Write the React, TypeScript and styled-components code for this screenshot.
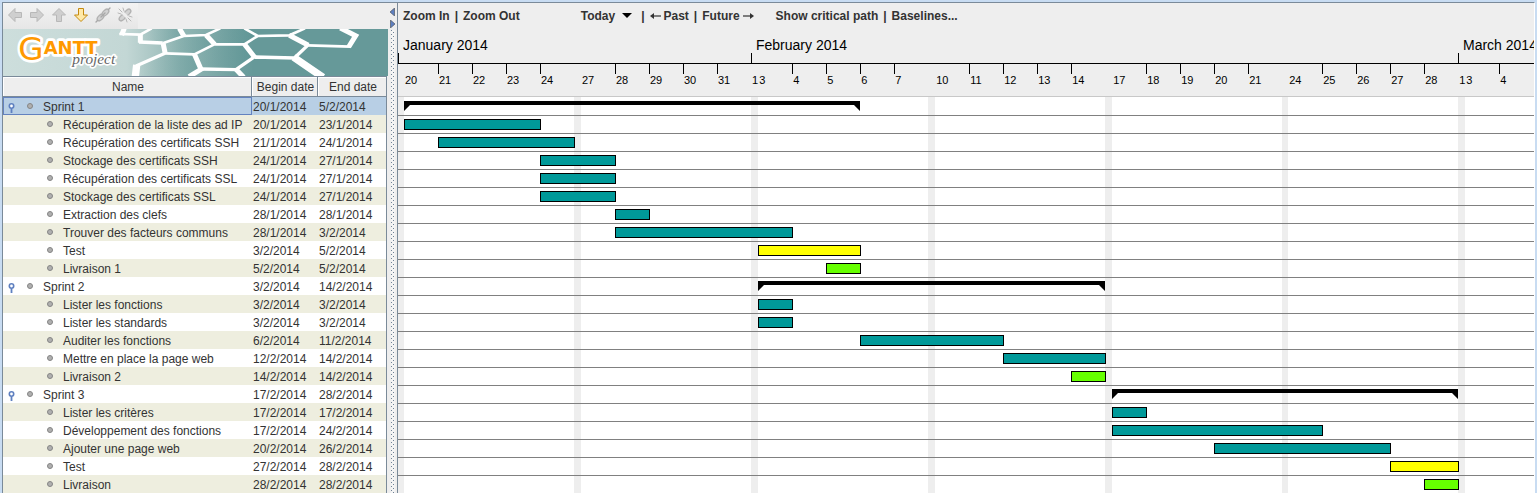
import React from "react";
import styled, { createGlobalStyle } from "styled-components";

const GlobalStyle = createGlobalStyle`
  * { box-sizing: border-box; }
  body {
    margin: 0;
    background: #eeeeee;
    color: #333333;
    font: 12px/18px "Liberation Sans", Arial, sans-serif;
  }
`;

/* ---------- Data ---------- */

const DAY = 34;
const LEAD = 6;

type Week = { days: number[]; gap: number; monthStart?: boolean };

const weeks: Week[] = [
  { days: [20, 21, 22, 23, 24], gap: 7 },
  { days: [27, 28, 29, 30, 31], gap: 7, monthStart: true },
  { days: [3, 4, 5, 6, 7], gap: 7 },
  { days: [10, 11, 12, 13, 14], gap: 7 },
  { days: [17, 18, 19, 20, 21], gap: 6 },
  { days: [24, 25, 26, 27, 28], gap: 7, monthStart: true },
  { days: [3, 4], gap: 7 },
];

const weekStart = (index: number) =>
  weeks.slice(0, index).reduce((x, week) => x + DAY * 5 + week.gap, LEAD);

const months = [
  { name: "January 2014", width: weekStart(2) - 7 },
  { name: "February 2014", width: weekStart(6) - weekStart(2) },
  { name: "March 2014", width: 200 },
];

type Kind = "summary" | "task" | "test" | "delivery";
type Task = {
  name: string;
  begin: string;
  end: string;
  kind: Kind;
  /* [week, working day] of the first day and of the last day */
  from: [number, number];
  to: [number, number];
};

const t = (
  name: string,
  begin: string,
  end: string,
  kind: Kind,
  from: [number, number],
  to: [number, number]
): Task => ({ name, begin, end, kind, from, to });

const tasks: Task[] = [
  t("Sprint 1", "20/1/2014", "5/2/2014", "summary", [0, 0], [2, 2]),
  t("Récupération de la liste des ad IP", "20/1/2014", "23/1/2014", "task", [0, 0], [0, 3]),
  t("Récupération des certificats SSH", "21/1/2014", "24/1/2014", "task", [0, 1], [0, 4]),
  t("Stockage des certificats SSH", "24/1/2014", "27/1/2014", "task", [0, 4], [1, 0]),
  t("Récupération des certificats SSL", "24/1/2014", "27/1/2014", "task", [0, 4], [1, 0]),
  t("Stockage des certificats SSL", "24/1/2014", "27/1/2014", "task", [0, 4], [1, 0]),
  t("Extraction des clefs", "28/1/2014", "28/1/2014", "task", [1, 1], [1, 1]),
  t("Trouver des facteurs communs", "28/1/2014", "3/2/2014", "task", [1, 1], [2, 0]),
  t("Test", "3/2/2014", "5/2/2014", "test", [2, 0], [2, 2]),
  t("Livraison 1", "5/2/2014", "5/2/2014", "delivery", [2, 2], [2, 2]),
  t("Sprint 2", "3/2/2014", "14/2/2014", "summary", [2, 0], [3, 4]),
  t("Lister les fonctions", "3/2/2014", "3/2/2014", "task", [2, 0], [2, 0]),
  t("Lister les standards", "3/2/2014", "3/2/2014", "task", [2, 0], [2, 0]),
  t("Auditer les fonctions", "6/2/2014", "11/2/2014", "task", [2, 3], [3, 1]),
  t("Mettre en place la page web", "12/2/2014", "14/2/2014", "task", [3, 2], [3, 4]),
  t("Livraison 2", "14/2/2014", "14/2/2014", "delivery", [3, 4], [3, 4]),
  t("Sprint 3", "17/2/2014", "28/2/2014", "summary", [4, 0], [5, 4]),
  t("Lister les critères", "17/2/2014", "17/2/2014", "task", [4, 0], [4, 0]),
  t("Développement des fonctions", "17/2/2014", "24/2/2014", "task", [4, 0], [5, 0]),
  t("Ajouter une page web", "20/2/2014", "26/2/2014", "task", [4, 3], [5, 2]),
  t("Test", "27/2/2014", "28/2/2014", "test", [5, 3], [5, 4]),
  t("Livraison", "28/2/2014", "28/2/2014", "delivery", [5, 4], [5, 4]),
];

const dayX = ([week, day]: [number, number]) => weekStart(week) + day * DAY;

/* ---------- Window ---------- */

const Window = styled.main`
  display: flex;
  height: 100vh;
  overflow: hidden;
  border: solid #c8dcf2;
  border-width: 2px 2px 0;
`;

const TaskPanel = styled.section`
  flex: 0 0 386px;
  border: solid #7a8a99;
  border-width: 1px 0 0 1px;
`;

const Splitter = styled.div`
  flex: 0 0 9px;
  display: flex;
  flex-direction: column;
  border-top: 1px solid #7a8a99;
  padding: 3px 1px 0 2px;
`;

const SplitterButton = styled.button`
  display: block;
  height: 12px;
  padding: 0;
  border: 0;
  background: none;
  svg { display: block; }
`;

const SplitterGrip = styled.div`
  flex: 1;
  width: 4px;
  margin-left: 1px;
  background-color: #f4f4f4;
  background-image:
    conic-gradient(at 1px 1px, transparent 75%, #6f8296 0),
    conic-gradient(at 1px 1px, transparent 75%, #6f8296 0);
  background-size: 4px 4px;
  background-position: 0 0, 2px 2px;
`;

const ChartPanel = styled.section`
  flex: 1;
  min-width: 0;
  display: flex;
  flex-direction: column;
  border: solid #7a8a99;
  border-width: 1px 0 0 1px;
  border-right: 1px solid #ffffff;
  overflow: hidden;
`;

/* ---------- Task panel ---------- */

const IconBar = styled.div`
  display: flex;
  width: 135px;
  height: 26px;
  padding: 1px 0 0 1px;
  background: linear-gradient(#f3f3f3, #e6e6e6);
`;

const IconButton = styled.button`
  width: 22px;
  height: 22px;
  padding: 3px;
  border: 0;
  background: none;
  svg { display: block; }
`;

const Banner = styled.svg`
  display: block;
  width: 385px;
  height: 47px;
`;

const Table = styled.table`
  width: 384px;
  table-layout: fixed;
  border-collapse: separate;
  border-spacing: 0;
  border-right: 1px solid #7a8a99;
`;

const HeadCell = styled.th<{ $width?: number }>`
  width: ${(p) => (p.$width ? p.$width + "px" : "auto")};
  height: 21px;
  padding: 2px 0 0 2px;
  border: 1px solid #7a8a99;
  border-left: 0;
  box-shadow: inset 1px 1px #ffffff;
  background: #eeeeee;
  font-weight: normal;
  line-height: 17px;
  white-space: nowrap;
  &:last-child { border-right: 0; }
`;

const Row = styled.tr<{ $selected: boolean }>`
  background: #ffffff;
  &:nth-child(even) { background: #eeeedf; }
  ${(p) => p.$selected && "background: #b8cfe5;"}
`;

const Cell = styled.td`
  height: 18px;
  padding: 2px 0 0 1px;
  line-height: 16px;
  white-space: nowrap;
`;

const NameCell = styled(Cell)<{ $selected: boolean }>`
  padding: 2px 0 0;
  ${(p) => p.$selected && "box-shadow: inset 0 0 0 1px #6382bf;"}
`;

const NameContent = styled.div<{ $child: boolean }>`
  display: flex;
  align-items: center;
  height: 16px;
  padding-left: ${(p) => (p.$child ? 44 : 4)}px;
`;

const Toggle = styled.button`
  width: 20px;
  height: 14px;
  padding: 0;
  border: 0;
  background: none;
  svg { display: block; }
`;

const Bullet = styled.span`
  width: 6px;
  height: 6px;
  margin: 0 10px 2px 0;
  border: 1px solid #858585;
  border-radius: 50%;
  background: #b0b0b0;
`;

/* ---------- Chart panel ---------- */

const ChartBar = styled.nav`
  display: flex;
  height: 26px;
  padding: 4px 0 0 5px;
  font-weight: bold;
`;

const Group = styled.div<{ $after: number }>`
  display: flex;
  gap: 5px;
  margin-right: ${(p) => p.$after}px;
`;

const TextButton = styled.button`
  display: flex;
  align-items: center;
  gap: 3px;
  height: 18px;
  padding: 0;
  border: 0;
  background: none;
  color: inherit;
  font: inherit;
  white-space: nowrap;
`;

const Months = styled.div`
  display: flex;
  align-items: flex-end;
  height: 35px;
  border-bottom: 1px solid #000000;
  color: #000000;
`;

const Month = styled.div<{ $width: number }>`
  flex: 0 0 ${(p) => p.$width}px;
  padding: 0 0 9px 5px;
  background: linear-gradient(#000, #000) 0 100% / 1px 10px no-repeat;
  font-size: 14px;
  line-height: 18px;
  white-space: nowrap;
`;

const Days = styled.div`
  display: flex;
  height: 33px;
  border-bottom: 1px solid #c8c8c8;
  color: #000000;
  font-size: 11px;
`;

const DayLabel = styled.div<{ $width: number; $tick?: boolean }>`
  flex: 0 0 ${(p) => p.$width}px;
  padding: 7px 0 0 1px;
  background: ${(p) =>
    p.$tick ? "linear-gradient(#000, #000) 0 0 / 1px 10px no-repeat" : "none"};
`;

const Plot = styled.div`
  display: grid;
  flex: 1;
  min-height: 0;
  background: #ffffff;
  padding-top: 1px;
`;

const Weekends = styled.div`
  grid-area: 1 / 1;
  display: flex;
  margin-top: -1px;
  min-width: 0;
  overflow: hidden;
`;

const Weekend = styled.div<{ $width: number }>`
  flex: 0 0 ${(p) => p.$width}px;
  margin-right: ${DAY * 5}px;
  background: #eeeeee;
`;

const Bars = styled.div`
  grid-area: 1 / 1;
  min-width: 0;
`;

const Lane = styled.div`
  height: 18px;
  padding-top: 3px;
  border-bottom: 1px solid #808080;
`;

const colours = { summary: "#000000", task: "#009999", test: "#ffff00", delivery: "#66ff00" };

const Bar = styled.div<{ $kind: Kind }>`
  background: ${(p) => colours[p.$kind]};
  ${(p) =>
    p.$kind === "summary"
      ? `height: 10px;
         clip-path: polygon(0 0, 100% 0, 100% 100%, calc(100% - 6px) 4px, 6px 4px, 0 100%);`
      : `height: 11px;
         border: 1px solid #000000;`}
`;

/* ---------- Icons ---------- */

const BlockArrow = ({ angle, active }: { angle: number; active?: boolean }) => (
  <svg width="16" height="16" viewBox="0 0 16 16">
    <path
      d="M1.5 8 8 1.5V5.5H14.5V10.5H8V14.5Z"
      transform={`rotate(${angle} 8 8)`}
      fill={active ? "#ffe9a8" : "#cfcfcf"}
      stroke={active ? "#c48a10" : "#b8b8b8"}
      strokeLinejoin="round"
    />
  </svg>
);

const Chain = ({ broken }: { broken?: boolean }) => (
  <svg width="16" height="16" viewBox="0 0 16 16" fill="none" strokeLinecap="round">
    <g stroke="#b2b2b2" strokeWidth="1.4">
      <ellipse cx="5.5" cy="10.5" rx="4" ry="2.3" transform="rotate(-45 5.5 10.5)" fill="#d2d2d2" />
      <ellipse cx="10.5" cy="5.5" rx="4" ry="2.3" transform="rotate(-45 10.5 5.5)" fill="#d2d2d2" />
    </g>
    {broken ? (
      <>
        <path d="M5 5 11 11" stroke="#eeeeee" strokeWidth="3" />
        <path
          d="M2 2 5 5M6 1 7 4M1 6 4 7M11 11 14 14M9 12 10 15M12 9 15 10"
          stroke="#b8b8b8"
        />
      </>
    ) : (
      <path d="M6 10 10 6M1 15 2.5 13.5M13.5 2.5 15 1" stroke="#a8a8a8" strokeWidth="1.4" />
    )}
  </svg>
);

const Handle = () => (
  <svg width="9" height="14" viewBox="0 0 9 14" fill="none">
    <circle cx="4.5" cy="6" r="2.2" fill="#ffffff" stroke="#5f80c0" strokeWidth="1.6" />
    <path d="M4.5 8.5V13" stroke="#5f80c0" strokeWidth="1.8" />
  </svg>
);

const LineArrow = ({ right }: { right?: boolean }) => (
  <svg width="11" height="8" viewBox="0 0 11 8">
    <g transform={right ? "rotate(180 5.5 4)" : undefined}>
      <path d="M0 4 4 1V7Z" fill="#333333" />
      <path d="M2 4H11" stroke="#333333" strokeWidth="1.2" />
    </g>
  </svg>
);

const Logo = () => (
  <Banner viewBox="0 0 1155 141" preserveAspectRatio="none" role="img" aria-label="Gantt Project">
    <defs>
      <linearGradient id="sea">
        <stop offset="0" stopColor="#cddedc" />
        <stop offset="0.32" stopColor="#c3d7d5" />
        <stop offset="0.46" stopColor="#93b7b5" />
        <stop offset="0.65" stopColor="#669999" />
      </linearGradient>
      <linearGradient id="cell">
        <stop offset="0" stopColor="#5c9494" stopOpacity="0" />
        <stop offset="1" stopColor="#5c9494" stopOpacity="0.5" />
      </linearGradient>
    </defs>
    <rect width="1155" height="141" fill="url(#sea)" />
    <g transform="translate(324 -9)">
      <g fill="url(#cell)">
        <path d="M88 26 120 9H205L218 30 155 52 88 48Z" />
        <path d="M155 52 218 30 285 27 310 55 250 85 162 82Z" />
        <path d="M75 118 162 82 250 85 270 128 235 150H75Z" />
        <path d="M250 85 310 55H400L430 92 375 130 270 128Z" />
        <path d="M285 27 325 9H400L440 30 400 55H310Z" />
      </g>
      <g fill="none" stroke="#ffffff" strokeWidth="8">
        <path d="M25 24 88 26 122 7M155 52 218 30 285 27 328 7M310 55H400L440 30 535 28 582 7M400 7 440 30M162 82 250 85 310 55M590 58 718 62" />
        <path d="M84 48 155 51M270 129 375 131 430 93 550 96 590 58M75 120 162 82" strokeWidth="10" />
      </g>
      <g fill="none" stroke="#ffffff" strokeWidth="15">
        <path d="M32 27 40 7M88 24V50M205 7 219 31M156 50 163 84M285 27 311 55M535 28 592 58" />
        <path d="M688 6 734 29 713 63M400 54 431 94M250 84 270 130 234 152M375 130 398 154" />
        <path d="M77 117 73 152M548 94 636 154" strokeWidth="22" />
      </g>
    </g>
    <g stroke="#ffffff" strokeLinejoin="round" paintOrder="stroke">
      <g fill="#ff9900" fontFamily="DejaVu Sans, sans-serif" strokeWidth="16">
        <text x="46" y="92" fontSize="98">G</text>
        <text x="122" y="74" fontSize="54" fontWeight="bold">ANTT</text>
      </g>
      <text x="208" y="106" fill="#666666" fontFamily="Liberation Serif, Times New Roman, serif" fontStyle="italic" fontSize="46" strokeWidth="10">
        project
      </text>
    </g>
  </Banner>
);

/* ---------- Page ---------- */

export default function App() {
  return (
    <>
      <GlobalStyle />
      <Window>
        <TaskPanel>
          <IconBar>
            <IconButton aria-label="Unindent"><BlockArrow angle={0} /></IconButton>
            <IconButton aria-label="Indent"><BlockArrow angle={180} /></IconButton>
            <IconButton aria-label="Move up"><BlockArrow angle={90} /></IconButton>
            <IconButton aria-label="Move down"><BlockArrow angle={270} active /></IconButton>
            <IconButton aria-label="Link tasks"><Chain /></IconButton>
            <IconButton aria-label="Unlink tasks"><Chain broken /></IconButton>
          </IconBar>
          <Logo />
          <Table>
            <thead>
              <tr>
                <HeadCell>Name</HeadCell>
                <HeadCell $width={66}>Begin date</HeadCell>
                <HeadCell $width={68}>End date</HeadCell>
              </tr>
            </thead>
            <tbody>
              {tasks.map((task, i) => (
                <Row key={i} $selected={i === 0}>
                  <NameCell $selected={i === 0}>
                    <NameContent $child={task.kind !== "summary"}>
                      {task.kind === "summary" && (
                        <Toggle aria-label={`Collapse ${task.name}`}><Handle /></Toggle>
                      )}
                      <Bullet />
                      {task.name}
                    </NameContent>
                  </NameCell>
                  <Cell>{task.begin}</Cell>
                  <Cell>{task.end}</Cell>
                </Row>
              ))}
            </tbody>
          </Table>
        </TaskPanel>

        <Splitter>
          <SplitterButton aria-label="Hide task list">
            <svg width="5" height="8" viewBox="0 0 5 8"><path d="M4.5 0V8L0 4Z" fill="#5f80c0" stroke="#333" strokeWidth="0.5" /></svg>
          </SplitterButton>
          <SplitterButton aria-label="Hide chart">
            <svg width="5" height="8" viewBox="0 0 5 8"><path d="M0.5 0V8L5 4Z" fill="#5f80c0" stroke="#333" strokeWidth="0.5" /></svg>
          </SplitterButton>
          <SplitterGrip />
        </Splitter>

        <ChartPanel>
          <ChartBar>
            <Group $after={61}>
              <TextButton>Zoom In</TextButton>|<TextButton>Zoom Out</TextButton>
            </Group>
            <Group $after={22}>
              <TextButton>
                Today
                <svg width="18" height="6" viewBox="0 0 18 6"><path d="M4 0H14L9 5Z" fill="#000" /></svg>
              </TextButton>
              |
              <TextButton><LineArrow />Past</TextButton>|
              <TextButton>Future<LineArrow right /></TextButton>
            </Group>
            <Group $after={0}>
              <TextButton>Show critical path</TextButton>|<TextButton>Baselines...</TextButton>
            </Group>
          </ChartBar>
          <Months>
            {months.map((month) => (
              <Month key={month.name} $width={month.width}>{month.name}</Month>
            ))}
          </Months>
          <Days>
            <DayLabel $width={LEAD} />
            {weeks.map((week, w) => (
              <React.Fragment key={w}>
                {week.days.map((day, d) => (
                  <DayLabel key={d} $width={DAY} $tick={d > 0}>{day}</DayLabel>
                ))}
                <DayLabel $width={week.gap}>{week.monthStart ? 1 : null}</DayLabel>
              </React.Fragment>
            ))}
          </Days>
          <Plot>
            <Weekends>
              <Weekend $width={LEAD} />
              {weeks.map((week, w) => (
                <Weekend key={w} $width={week.gap} />
              ))}
            </Weekends>
            <Bars>
              {tasks.map((task, i) => {
                const x = dayX(task.from);
                const width = dayX(task.to) + DAY - x + (task.kind === "summary" ? 0 : 1);
                return (
                  <Lane key={i}>
                    <Bar $kind={task.kind} style={{ marginLeft: x, width }} />
                  </Lane>
                );
              })}
            </Bars>
          </Plot>
        </ChartPanel>
      </Window>
    </>
  );
}
